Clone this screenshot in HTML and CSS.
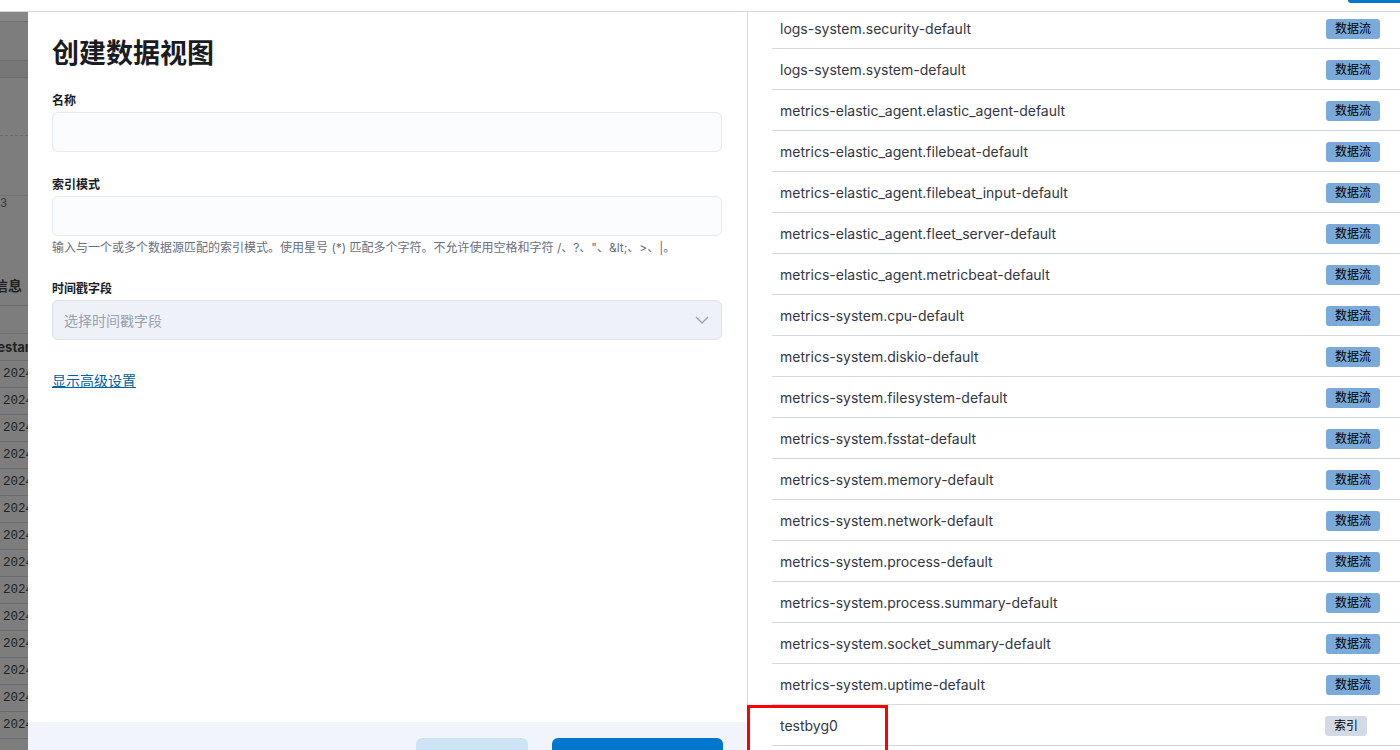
FILE: index.html
```html
<!DOCTYPE html>
<html lang="zh">
<head>
<meta charset="utf-8">
<title>创建数据视图</title>
<link rel="stylesheet" href="styles.css">
</head>
<body>
<header class="topbar"><div class="top-btn"></div></header>
<div class="main">
  <aside class="behind">
    <div class="bh bh-1"></div>
    <div class="bh bh-2"></div>
    <div class="bh bh-3"></div>
    <div class="bh bh-4"></div>
    <div class="bh bh-5"></div>
    <div class="bh bh-6"><span class="mono">3</span></div>
    <div class="bh bh-7"><span>字段信息</span></div>
    <div class="bh bh-8"></div>
    <div class="bh bh-9"><span>@timestamp</span></div>
    <div class="bh-row mono">2024</div>
    <div class="bh-row mono">2024</div>
    <div class="bh-row mono">2024</div>
    <div class="bh-row mono">2024</div>
    <div class="bh-row mono">2024</div>
    <div class="bh-row mono">2024</div>
    <div class="bh-row mono">2024</div>
    <div class="bh-row mono">2024</div>
    <div class="bh-row mono">2024</div>
    <div class="bh-row mono">2024</div>
    <div class="bh-row mono">2024</div>
    <div class="bh-row mono">2024</div>
    <div class="bh-row mono">2024</div>
    <div class="bh-row mono">2024</div>
  </aside>
  <div class="flyout">
    <section class="form-panel">
      <div class="form-body">
        <h1 class="title">创建数据视图</h1>
        <div class="field">
          <label class="label">名称</label>
          <div class="input"></div>
        </div>
        <div class="field">
          <label class="label">索引模式</label>
          <div class="input"></div>
          <p class="help">输入与一个或多个数据源匹配的索引模式。使用星号 (*) 匹配多个字符。不允许使用空格和字符 /、?、"、&amp;lt;、&gt;、|。</p>
        </div>
        <div class="field">
          <label class="label">时间戳字段</label>
          <div class="select">
            <span class="placeholder">选择时间戳字段</span>
            <svg class="chev" width="14" height="8" viewBox="0 0 14 8"><polyline points="1,1 7,7 13,1" fill="none" stroke="#98a2b3" stroke-width="1.3"/></svg>
          </div>
        </div>
        <a class="link" href="#">显示高级设置</a>
      </div>
      <footer class="footer">
        <button class="btn btn-empty">关闭</button>
        <div class="footer-right">
          <button class="btn btn-secondary">使用但不保存</button>
          <button class="btn btn-primary">将数据视图保存到 Kibana</button>
        </div>
      </footer>
    </section>
    <section class="list-panel">
      <ul class="list">
        <li class="row"><span>logs-system.security-default</span><span class="badge stream">数据流</span></li>
        <li class="row"><span>logs-system.system-default</span><span class="badge stream">数据流</span></li>
        <li class="row"><span>metrics-elastic_agent.elastic_agent-default</span><span class="badge stream">数据流</span></li>
        <li class="row"><span>metrics-elastic_agent.filebeat-default</span><span class="badge stream">数据流</span></li>
        <li class="row"><span>metrics-elastic_agent.filebeat_input-default</span><span class="badge stream">数据流</span></li>
        <li class="row"><span>metrics-elastic_agent.fleet_server-default</span><span class="badge stream">数据流</span></li>
        <li class="row"><span>metrics-elastic_agent.metricbeat-default</span><span class="badge stream">数据流</span></li>
        <li class="row"><span>metrics-system.cpu-default</span><span class="badge stream">数据流</span></li>
        <li class="row"><span>metrics-system.diskio-default</span><span class="badge stream">数据流</span></li>
        <li class="row"><span>metrics-system.filesystem-default</span><span class="badge stream">数据流</span></li>
        <li class="row"><span>metrics-system.fsstat-default</span><span class="badge stream">数据流</span></li>
        <li class="row"><span>metrics-system.memory-default</span><span class="badge stream">数据流</span></li>
        <li class="row"><span>metrics-system.network-default</span><span class="badge stream">数据流</span></li>
        <li class="row"><span>metrics-system.process-default</span><span class="badge stream">数据流</span></li>
        <li class="row"><span>metrics-system.process.summary-default</span><span class="badge stream">数据流</span></li>
        <li class="row"><span>metrics-system.socket_summary-default</span><span class="badge stream">数据流</span></li>
        <li class="row"><span>metrics-system.uptime-default</span><span class="badge stream">数据流</span></li>
        <li class="row"><span>testbyg0</span><span class="badge index">索引</span></li>
      </ul>
    </section>
  </div>
  <div class="annotation"></div>
</div>
</body>
</html>
```

FILE: styles.css
```css
* { box-sizing: border-box; }
html, body {
  margin: 0;
  padding: 0;
  width: 1400px;
  height: 750px;
  overflow: hidden;
  background: #fff;
  font-family: Inter, "Noto Sans CJK SC", sans-serif;
  color: #343741;
}

.topbar {
  height: 12px;
  border-bottom: 1px solid #d3dae6;
  background: #fff;
  display: flex;
  justify-content: flex-end;
}
.top-btn {
  width: 52px;
  height: 3px;
  background: #0077cc;
  border-radius: 0 0 0 4px;
}

.main {
  position: relative;
  display: flex;
  height: 738px;
  overflow: hidden;
}

/* dimmed page behind the flyout */
.behind {
  width: 28px;
  flex: 0 0 28px;
  background: #7d7d7d;
  color: #232323;
  overflow: hidden;
  font-size: 13px;
}
.mono { font-family: "Liberation Mono", "DejaVu Sans Mono", monospace; }
.bh { border-bottom: 1px solid #6e6e6e; }
.bh-1 { height: 10px; background: #878787; }
.bh-2 { height: 39px; }
.bh-3 { height: 17px; background: #777; }
.bh-4 { height: 58px; border-bottom: 1px dashed #6b6b6b; }
.bh-5 { height: 60px; border-bottom-color: #747474; }
.bh-6 { height: 74px; border-bottom: none; font-size: 12px; line-height: 14px; color: #3a3a3a; }
.bh-7 {
  height: 36px;
  padding-top: 6px;
  line-height: 20px;
  font-weight: 700;
  display: flex;
  justify-content: flex-end;
  padding-right: 6px;
  white-space: nowrap;
  font-size: 14px;
}
.bh-8 { height: 28px; }
.bh-9 {
  height: 27px;
  line-height: 26px;
  font-weight: 700;
  white-space: nowrap;
  font-size: 13px;
}
.bh-9 span { display: inline-block; margin-left: -36px; }
.bh-row {
  height: 27px;
  line-height: 26px;
  border-bottom: 1px solid #6a6a72;
  padding-left: 3px;
  font-size: 12.5px;
  white-space: nowrap;
}

.flyout {
  flex: 1;
  display: flex;
  background: #fff;
}

.form-panel {
  width: 720px;
  flex: 0 0 720px;
  border-right: 1px solid #d3dae6;
  display: flex;
  flex-direction: column;
}
.form-body {
  flex: 0 0 710px;
  padding: 24px 24px 0 24px;
}
.title {
  margin: 0 0 20px;
  font-size: 27px;
  line-height: 36px;
  font-weight: 700;
  color: #1a1c21;
}
.field { margin-bottom: 24px; }
.label {
  display: block;
  font-size: 12px;
  line-height: 18px;
  font-weight: 700;
  color: #1a1c21;
  margin-bottom: 2px;
}
.input {
  height: 40px;
  width: 670px;
  background: #fbfcfd;
  border: 1px solid #e6e9f1;
  border-radius: 6px;
}
.help {
  margin: 4px 0 0;
  font-size: 12px;
  line-height: 16px;
  color: #69707d;
  white-space: nowrap;
}
.select {
  height: 40px;
  width: 670px;
  background: #eef1f7;
  border: 1px solid #dde2ea;
  border-radius: 6px;
  display: flex;
  align-items: center;
  justify-content: space-between;
  padding: 0 12px 0 11px;
}
.placeholder {
  font-size: 14px;
  color: #98a2b3;
}
.chev { display: block; }
.link {
  display: inline-block;
  margin-top: 7px;
  font-size: 14px;
  line-height: 20px;
  color: #0061a6;
  text-decoration: underline;
}

.footer {
  flex: 0 0 72px;
  background: #f1f4fa;
  padding: 16px 24px;
  display: flex;
  justify-content: space-between;
  align-items: flex-start;
}
.footer-right { display: flex; gap: 24px; }
.btn {
  height: 40px;
  border: none;
  border-radius: 6px;
  font-family: inherit;
  font-size: 14px;
  font-weight: 500;
  padding: 16px 16px 0;
  line-height: 24px;
}
.btn-empty { background: transparent; color: #0061a6; }
.btn-secondary { width: 112px; background: #cce4f5; color: #0061a6; }
.btn-primary { width: 171px; background: #0077cc; color: #fff; }

.list-panel {
  flex: 1;
  padding-left: 24px;
  overflow: hidden;
}
.list {
  list-style: none;
  margin: -4px 0 0;
  padding: 0;
}
.row {
  height: 41px;
  border-bottom: 1px solid #d3dae6;
  display: flex;
  align-items: center;
  justify-content: space-between;
  padding: 0 20px 0 8px;
  font-size: 14px;
  color: #343741;
}
.badge {
  height: 20px;
  line-height: 20px;
  padding: 0 9px;
  border-radius: 3px;
  font-size: 12px;
  color: #000;
  margin-top: 2px;
}
.badge.stream { background: #79aad9; }
.badge.index { background: #d3dae6; margin-right: 13px; }

.annotation {
  position: absolute;
  left: 747px;
  top: 693px;
  width: 141px;
  height: 70px;
  border: 3px solid #ff0000;
}
```
